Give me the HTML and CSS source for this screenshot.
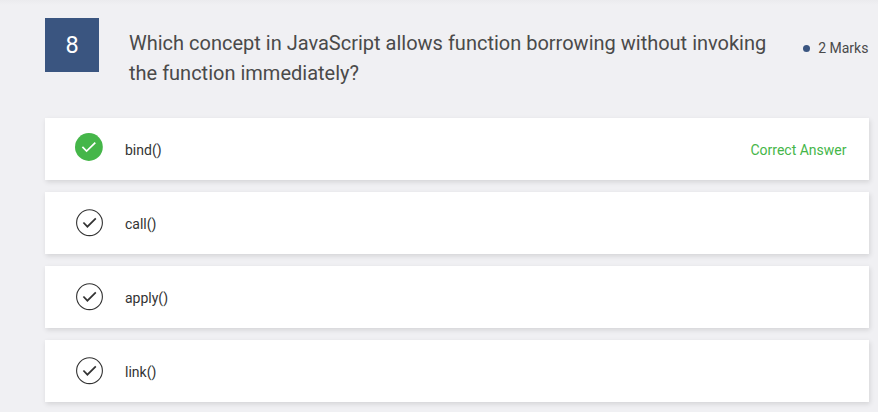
FILE: index.html
```html
<!DOCTYPE html>
<html lang="en">
<head>
<meta charset="utf-8">
<title>Question 8</title>
<link rel="stylesheet" href="styles.css">
</head>
<body>
<main class="quiz">
  <header class="question">
    <div class="number">8</div>
    <h1 class="title">Which concept in JavaScript allows function borrowing without invoking the function immediately?</h1>
    <div class="marks">2 Marks</div>
  </header>
  <ul class="options">
    <li class="option correct">
      <svg class="check" viewBox="0 0 28 28"><circle cx="13.9" cy="14" r="13.9"/><path d="M7.4 13.9l4.2 4.2 8.7-8.5"/></svg>
      <span class="label">bind()</span><span class="note">Correct Answer</span>
    </li>
    <li class="option">
      <svg class="check" viewBox="0 0 28 28"><circle cx="14.5" cy="13.7" r="12.9"/><path d="M8.4 13.5l4 4.2 8.4-8.3"/></svg>
      <span class="label">call()</span>
    </li>
    <li class="option">
      <svg class="check" viewBox="0 0 28 28"><circle cx="14.5" cy="13.7" r="12.9"/><path d="M8.4 13.5l4 4.2 8.4-8.3"/></svg>
      <span class="label">apply()</span>
    </li>
    <li class="option">
      <svg class="check" viewBox="0 0 28 28"><circle cx="14.5" cy="13.7" r="12.9"/><path d="M8.4 13.5l4 4.2 8.4-8.3"/></svg>
      <span class="label">link()</span>
    </li>
  </ul>
</main>
</body>
</html>
```
FILE: styles.css
```css
* { box-sizing: border-box; }
body {
  margin: 0;
  height: 412px;
  overflow: hidden;
  background: #f0f0f3 linear-gradient(#ebebee, #f0f0f3) no-repeat 0 0 / 100% 5px;
  font-family: Roboto, "Liberation Sans", sans-serif;
  color: #333;
}
.quiz { padding: 18px 9px 0 45px; }
.question { display: flex; height: 100px; }
.number {
  width: 54px;
  height: 54px;
  background: #3a5580;
  color: #fff;
  font-size: 23.5px;
  font-weight: 400;
  line-height: 54px;
  text-align: center;
}
.title {
  width: 650px;
  margin: 10px 0 0 30px;
  font-size: 20px;
  font-weight: 400;
  line-height: 30px;
  color: #4a4a4a;
}
.marks {
  display: flex;
  align-items: center;
  height: 20px;
  margin: 20px .6px 0 auto;
  font-size: 14px;
  white-space: nowrap;
  color: #4a4a4a;
}
.marks::before {
  content: "";
  width: 7px;
  height: 7px;
  margin-right: 8px;
  border-radius: 50%;
  background: #3a5580;
}
.options {
  display: grid;
  gap: 12px;
  margin: 0;
  padding: 0;
  list-style: none;
}
.option {
  display: flex;
  align-items: flex-start;
  height: 62px;
  padding: 17px 22.5px 0 30px;
  background: #fff;
  box-shadow: 1px 2px 5px rgba(0, 0, 0, .12);
  font-size: 14px;
  line-height: 30px;
}
.correct { padding-top: 15px; }
.correct .label, .correct .note { padding-top: 2px; }
.check {
  width: 28px;
  height: 28px;
  margin: 0 22px 0 0;
  overflow: visible;
  fill: none;
  stroke: #333;
  stroke-width: 1.1;
}
.check path { stroke-width: 1.7; }
.correct .check circle { fill: #45b649; stroke: none; }
.correct .check path { stroke: #fff; }
.note { margin-left: auto; color: #45b649; }
```
